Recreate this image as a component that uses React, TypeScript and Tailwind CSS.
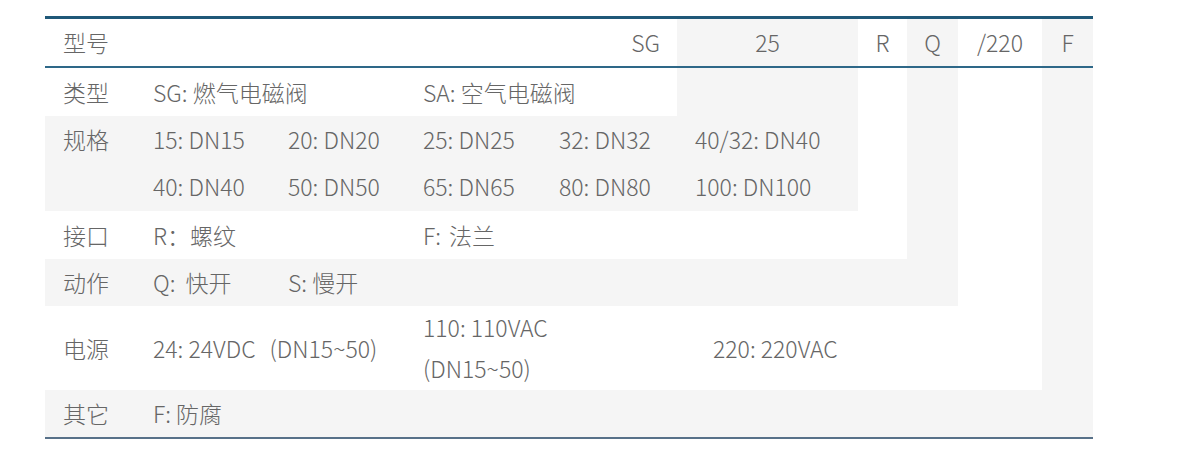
import type { ReactNode } from "react";

const COLS =
  "grid grid-cols-[90px_135px_135px_136px_136px_181px_49px_51px_84px_51px]";

const GRAY = "bg-[#f5f5f5]";

// columns 6..10 keep their own stripe colour once a row stops covering them
const columnBg: Record<number, string> = {
  6: GRAY,
  7: "bg-white",
  8: GRAY,
  9: "bg-white",
  10: GRAY,
};

const Tail = ({ from }: { from: number }) => (
  <>
    {[6, 7, 8, 9, 10]
      .filter((c) => c >= from)
      .map((c) => (
        <div key={c} className={columnBg[c]} />
      ))}
  </>
);

interface CellProps {
  children?: ReactNode;
  span?: string;
  bg: string;
  className?: string;
}

const Cell = ({ children, span = "", bg, className = "" }: CellProps) => (
  <div className={`${span} ${bg} flex items-center pl-[18px] ${className}`}>
    {children}
  </div>
);

const specs = [
  ["15: DN15", "40: DN40"],
  ["20: DN20", "50: DN50"],
  ["25: DN25", "65: DN65"],
  ["32: DN32", "80: DN80"],
  ["40/32: DN40", "100: DN100"],
];

const App = () => {
  return (
    <div
      className="bg-white w-[1200px] h-[450px] pt-4 pl-[45px] text-[23px] font-light text-[#666] whitespace-nowrap"
      style={{ fontFamily: '"Noto Sans CJK SC", "Noto Sans", sans-serif' }}
    >
      <div className="w-[1048px] border-t-[3px] border-[#1f5878]">
        {/* header */}
        <div className={`${COLS} h-[49px] border-b-2 border-[#2e6888]`}>
          <div className="col-span-5 flex items-center justify-between pl-[18px] pr-[17px]">
            <span>型号</span>
            <span>SG</span>
          </div>
          <div className={`${GRAY} flex items-center justify-center`}>25</div>
          <div className="flex items-center justify-center">R</div>
          <div className={`${GRAY} flex items-center justify-center`}>Q</div>
          <div className="flex items-center justify-center">/220</div>
          <div className={`${GRAY} flex items-center justify-center`}>F</div>
        </div>

        {/* body */}
        <div
          className={`${COLS} grid-rows-[48px_95px_48px_47px_84px_47px] border-b-2 border-[#587189]`}
        >
          {/* 类型 */}
          <Cell bg="bg-white">类型</Cell>
          <Cell bg="bg-white" span="col-span-2">
            SG: 燃气电磁阀
          </Cell>
          <Cell bg="bg-white" span="col-span-2">
            SA: 空气电磁阀
          </Cell>
          <Tail from={6} />

          {/* 规格 */}
          <div className={`${GRAY} pl-[18px]`}>
            <div className="h-[47px] flex items-center">规格</div>
          </div>
          {specs.map((pair) => (
            <div key={pair[0]} className={`${GRAY} pl-[18px]`}>
              <div className="h-[47px] flex items-center">{pair[0]}</div>
              <div className="h-[47px] flex items-center">{pair[1]}</div>
            </div>
          ))}
          <Tail from={7} />

          {/* 接口 */}
          <Cell bg="bg-white">接口</Cell>
          <Cell bg="bg-white" span="col-span-2">
            R：螺纹
          </Cell>
          <Cell bg="bg-white" span="col-span-4">
            F:<span className="ml-[8px]">法兰</span>
          </Cell>
          <Tail from={8} />

          {/* 动作 */}
          <Cell bg={GRAY}>动作</Cell>
          <Cell bg={GRAY}>
            Q:<span className="ml-[10px]">快开</span>
          </Cell>
          <Cell bg={GRAY} span="col-span-6">
            S: 慢开
          </Cell>
          <Tail from={9} />

          {/* 电源 */}
          <Cell bg="bg-white">电源</Cell>
          <Cell bg="bg-white" span="col-span-2">
            24: 24VDC<span className="ml-[14px]">(DN15~50)</span>
          </Cell>
          <div className="col-span-2 bg-white pl-[18px] flex flex-col justify-center leading-[41px]">
            <span>110: 110VAC</span>
            <span>(DN15~50)</span>
          </div>
          <Cell bg="bg-white" span="col-span-4" className="!pl-[36px]">
            220: 220VAC
          </Cell>
          <Tail from={10} />

          {/* 其它 */}
          <Cell bg={GRAY}>其它</Cell>
          <Cell bg={GRAY} span="col-span-9">
            F: 防腐
          </Cell>
        </div>
      </div>
    </div>
  );
};

export default App;
